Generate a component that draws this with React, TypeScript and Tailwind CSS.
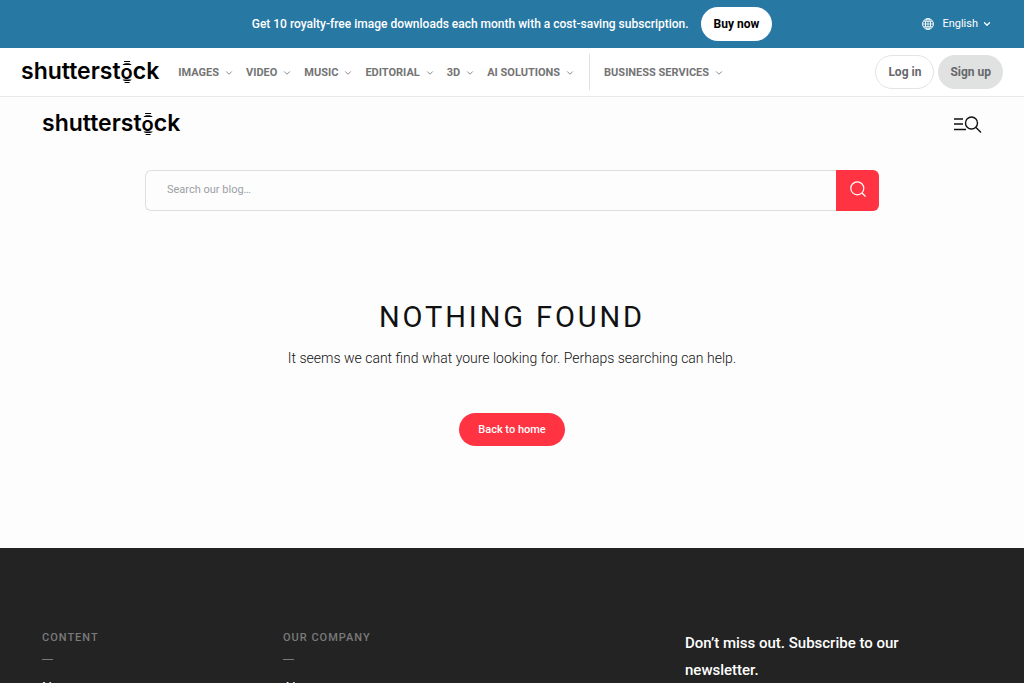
import React from "react";
import { ChevronDown } from "lucide-react";

function Logo() {
  return (
    <a href="#" aria-label="Shutterstock" className="mb-0.5 flex items-baseline font-[Inter,sans-serif] text-[23px] leading-6 font-semibold text-black">
      shutterst
      <span className="relative text-[20px]">
        o
        <svg aria-hidden="true" viewBox="0 0 12 24" className="absolute inset-x-0 top-1/2 h-6 w-full -translate-y-1/2" fill="currentColor">
          <path d="M3 1h6v1H3zM1.500 5C2 2.800 10 2.800 10.500 5zM1.500 19.500h9C10 21.500 2 21.500 1.500 19.500zM3.500 22h5v1h-5z" />
        </svg>
      </span>
      ck
    </a>
  );
}

const menu = ["IMAGES", "VIDEO", "MUSIC", "EDITORIAL", "3D", "AI SOLUTIONS"];

function MenuItem({ label }: { label: string }) {
  return (
    <button type="button" className="flex items-center gap-[5px] pt-0.5 whitespace-nowrap">
      {label}
      <ChevronDown className="size-[10px]" strokeWidth={2} />
    </button>
  );
}

function FooterColumn({ title, links }: { title: string; links: string[] }) {
  return (
    <section>
      <h2 className="text-[11px] leading-4 font-medium tracking-[1px] text-[#7a7a7a]">{title}</h2>
      <div className="mt-[13px] h-px w-[11px] bg-[#7a7a7a]" />
      <ul className="mt-4 text-sm leading-6">
        {links.map((l) => (
          <li key={l}><a href="#">{l}</a></li>
        ))}
      </ul>
    </section>
  );
}

export default function App() {
  return (
    <div className="h-screen overflow-hidden bg-[#fdfdfd] font-[Roboto,sans-serif] text-[#111]">
      <div className="grid h-12 grid-cols-[1fr_auto_1fr] items-center bg-[#2878a4] text-white">
        <span />
        <div className="flex items-center gap-3">
          <p className="text-[12px] font-medium">Get 10 royalty-free image downloads each month with a cost-saving subscription.</p>
          <a href="#" className="flex h-[34px] items-center rounded-full bg-white px-[13px] text-[12px] font-bold text-black">Buy now</a>
        </div>
        <button type="button" className="mr-8 flex items-center justify-self-end text-[11px]">
          <svg aria-hidden="true" viewBox="0 0 12 12" className="mr-2 size-3" fill="none" stroke="currentColor">
            <circle cx="6" cy="6" r="5.400" />
            <ellipse cx="6" cy="6" rx="2.600" ry="5.400" />
            <path d="M6 .6v10.800M.6 6h10.800M1.500 3.300h9M1.500 8.700h9" strokeWidth=".8" />
          </svg>
          English
          <ChevronDown className="ml-1 size-[10px]" strokeWidth={3} />
        </button>
      </div>

      <header className="flex h-[49px] items-center border-b border-[#e9e9e9] bg-white px-[21px]">
        <Logo />
        <nav className="ml-[19px] flex items-center gap-3 text-[11px] font-bold text-[#747474]">
          {menu.map((m) => <MenuItem key={m} label={m} />)}
          <div className="mx-0.5 h-9 w-px bg-[#e0e0e0]" />
          <MenuItem label="BUSINESS SERVICES" />
        </nav>
        <div className="ml-auto flex gap-1 text-[12px] font-bold text-[#66686b]">
          <a href="#" className="flex h-[34px] items-center rounded-full border border-[#e4e4e4] px-3">Log in</a>
          <a href="#" className="flex h-[34px] items-center rounded-full bg-[#e0e1e1] px-3">Sign up</a>
        </div>
      </header>

      <div className="flex h-[55px] items-center justify-between px-[42px]">
        <Logo />
        <button type="button" aria-label="Menu and search">
          <svg viewBox="0 0 28 18" className="h-[18px] w-7" fill="none" stroke="currentColor" strokeWidth="1.400">
            <path d="M0 3h9M0 8h9M0 13.500h12M22 11.500l5 5" />
            <circle cx="17.500" cy="7" r="6" />
          </svg>
        </button>
      </div>

      <main className="h-[396px] px-[145px] pt-[18px] text-center">
        <form className="flex h-[41px]" onSubmit={(e) => e.preventDefault()}>
          <input type="search" aria-label="Search our blog" placeholder="Search our blog…" className="min-w-0 flex-1 rounded-l-md border border-r-0 border-[#dedede] px-[21px] text-[11px] outline-none placeholder:text-[#9b9fa4]" />
          <button type="submit" aria-label="Search" className="flex w-[43px] items-center justify-center rounded-r-md bg-[#ff3341] text-white">
            <svg viewBox="0 0 16 16" className="mb-1 size-4" fill="none" stroke="currentColor" strokeWidth="1.200">
              <circle cx="7.300" cy="7.300" r="6.500" />
              <path d="M12 12l3.500 3.500" />
            </svg>
          </button>
        </form>
        <h1 className="mt-[86px] text-[29px] leading-10 tracking-widest">NOTHING FOUND</h1>
        <p className="mt-[9px] text-[14px] leading-6 font-light">It seems we cant find what youre looking for. Perhaps searching can help.</p>
        <a href="#" className="mt-[43px] inline-flex h-[33px] items-center rounded-full bg-[#ff3341] px-[19px] pt-0.5 text-[11px] font-medium text-white">Back to home</a>
      </main>

      <footer className="grid grid-cols-[241px_1fr_297px] bg-[#232323] px-[42px] pt-[82px] pb-20 text-white">
        <FooterColumn title="CONTENT" links={["Newest content"]} />
        <FooterColumn title="OUR COMPANY" links={["About us"]} />
        <p className="pr-12 text-[15px] leading-[27px] font-medium">Don’t miss out. Subscribe to our newsletter.</p>
      </footer>
    </div>
  );
}
